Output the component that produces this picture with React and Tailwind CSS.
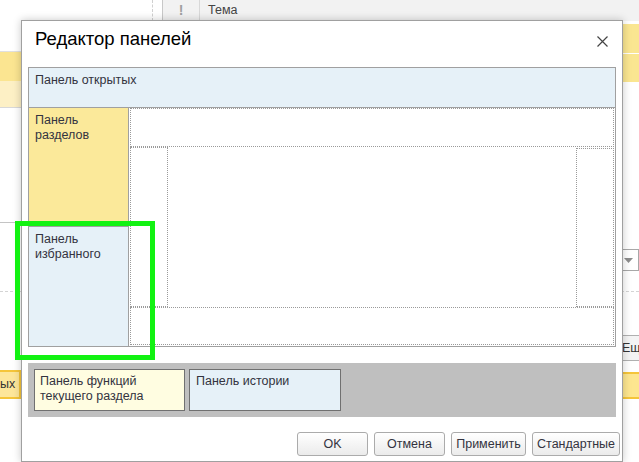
import React from "react";

const PanelLabel = ({ children, className = "" }) => (
    <div className={`text-[12.5px] leading-[15px] text-[#333340] ${className}`}>{children}</div>
);

const Button = ({ width, children }) => (
    <button
        className={`${width} h-[24px] rounded-[3px] border border-[#ababab] bg-gradient-to-b from-white to-[#ebebeb] text-[12.5px] text-[#333340] flex items-center justify-center`}
    >
        {children}
    </button>
);

// Background: the form behind the dialog
const Backdrop = () => (
    <>
        {/* header row of the table behind */}
        <div className="absolute left-[152px] top-0 h-[21px] border-l border-dashed border-[#d0d0d0]" />
        <div className="absolute left-[162px] top-0 right-0 h-[21px] bg-[#f2f2f2] border-l border-[#c8c8c8] flex items-center">
            <div className="w-[37px] h-full border-r border-[#d8d8d8] flex items-center justify-center text-[14px] font-bold text-[#a0a0a0]">!</div>
            <div className="pl-[8px] text-[12.5px] text-[#444]">Тема</div>
        </div>

        {/* left rows */}
        <div className="absolute left-0 top-[51px] w-[30px] border-t border-[#e0e0e0]">
            <div className="h-[29px] bg-[#fbe591]" />
            <div className="h-[27px] bg-[#fdf0c5] border-b border-[#d8d8d8]" />
        </div>
        <div className="absolute left-0 top-[222px] w-[30px] border-t border-[#c4c4c4]" />

        {/* right rows */}
        <div className="absolute left-[610px] top-[24px] right-0">
            <div className="h-[29px] bg-[#fae691]" />
            <div className="h-[28px] mt-px bg-[#fae691]" />
        </div>
        <div className="absolute left-[600px] top-[249px] w-[39px] h-[22px] border border-[#a8a8a8] bg-white flex items-center pl-[23px]">
            <svg width="9" height="5" viewBox="0 0 9 5"><path d="M0 0h9L4.5 5z" fill="#8c8c8c" /></svg>
        </div>

        <div className="absolute left-0 right-0 top-[291px] border-t border-dashed border-[#d4d4d4]" />

        <div className="absolute left-[600px] top-[335px] w-[45px] h-[26px] border border-[#b0b0b0] rounded-[3px] bg-[#f4f4f4] flex items-center pl-[21px] text-[12.5px] text-[#333]">Ещё</div>

        {/* yellow band: left chip and right part */}
        <div className="absolute left-0 top-[370px] w-[21px] h-[29px] bg-[#fde69a] border-y-2 border-r-2 border-[#f5c53a] flex items-center overflow-hidden">
            <span className="text-[12.5px] text-[#333] whitespace-nowrap">ых ф</span>
        </div>
        <div className="absolute left-[610px] right-0 top-[372px] h-[27px] bg-[#fde68f] border-y-2 border-[#f5c53a]" />
    </>
);

export default function App() {
    return (
        <div className="relative w-[639px] h-[462px] overflow-hidden bg-white font-['Liberation_Sans',Arial,sans-serif]">
            <Backdrop />

            {/* Dialog */}
            <div className="absolute left-[21px] top-[20px] w-[602px] h-[442px] bg-white border border-[#a0a0a0] shadow-[0_0_8px_rgba(0,0,0,0.22)] flex flex-col">
                {/* title */}
                <div className="h-[46px] flex items-start justify-between pl-[13px] pr-[14px]">
                    <div className="pt-[7px] text-[18.5px] leading-[22px] text-black">Редактор панелей</div>
                    <svg className="mt-[15px]" width="11" height="11" viewBox="0 0 11 11">
                        <path d="M0.5 0.5l10 10M10.5 0.5l-10 10" stroke="#444" strokeWidth="1.2" />
                    </svg>
                </div>

                {/* panel layout */}
                <div className="mx-[6px] border border-[#a0a0a0] flex flex-col">
                    <div className="h-[40px] bg-[#e6f1f8] border-b border-[#a0a0a0] pl-[6px] pt-[5px]">
                        <PanelLabel>Панель открытых</PanelLabel>
                    </div>
                    <div className="h-[238px] flex">
                        <div className="w-[100px] border-r border-[#a0a0a0] flex flex-col">
                            <div className="h-[119px] bg-[#fbe99a] border-b border-[#a0a0a0] pl-[6px] pt-[5px]">
                                <PanelLabel>Панель<br />разделов</PanelLabel>
                            </div>
                            <div className="flex-1 bg-[#e6f1f8] pl-[6px] pt-[5px]">
                                <PanelLabel>Панель<br />избранного</PanelLabel>
                            </div>
                        </div>
                        <div className="flex-1 flex flex-col px-px pb-px">
                            <div className="h-[39px] border border-dotted border-[#9a9a9a]" />
                            <div className="h-[160px] flex">
                                <div className="w-[38px] border border-dotted border-[#9a9a9a]" />
                                <div className="flex-1" />
                                <div className="w-[38px] border border-dotted border-[#9a9a9a] mt-px" />
                            </div>
                            <div className="h-[38px] border border-dotted border-[#9a9a9a]" />
                        </div>
                    </div>
                </div>

                {/* bottom panels */}
                <div className="mt-[16px] mx-[6px] h-[54px] bg-[#bfbfbf] p-[6px] flex gap-[4px]">
                    <div className="w-[151px] h-[42px] bg-[#fffde1] border border-[#707070] pl-[5px] pt-[4px]">
                        <PanelLabel>Панель функций<br />текущего раздела</PanelLabel>
                    </div>
                    <div className="w-[152px] h-[42px] bg-[#e6f1f8] border border-[#707070] pl-[6px] pt-[4px]">
                        <PanelLabel>Панель истории</PanelLabel>
                    </div>
                </div>

                {/* buttons */}
                <div className="mt-[15px] pr-[2px] flex justify-end gap-[6px]">
                    <Button width="w-[71px]">OK</Button>
                    <Button width="w-[71px]">Отмена</Button>
                    <Button width="w-[75px]">Применить</Button>
                    <Button width="w-[88px]">Стандартные</Button>
                </div>
            </div>

            {/* highlight */}
            <div className="absolute left-[15px] top-[221px] w-[140px] h-[139px] border-[5px] border-[#12f212]" />
        </div>
    );
}
